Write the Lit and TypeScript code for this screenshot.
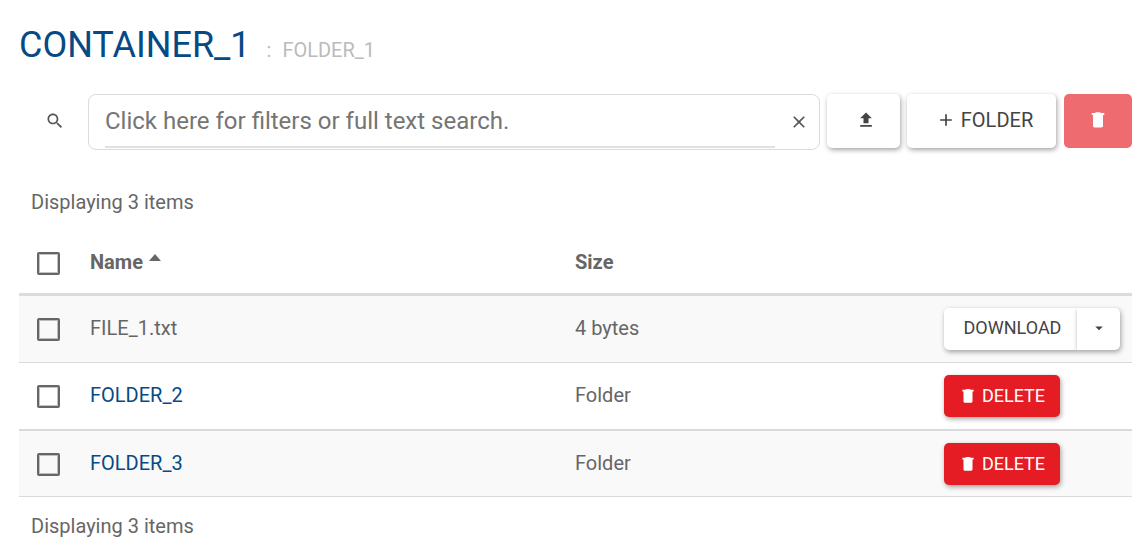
import { LitElement, html, css, svg, nothing } from "lit";
import { customElement, property } from "lit/decorators.js";

interface Item {
  name: string;
  size: string;
  folder: boolean;
}

const items: Item[] = [
  { name: "FILE_1.txt", size: "4 bytes", folder: false },
  { name: "FOLDER_2", size: "Folder", folder: true },
  { name: "FOLDER_3", size: "Folder", folder: true },
];

const glyphs = {
  search: svg`<path d="M15.5 14h-.79l-.28-.27C15.41 12.59 16 11.11 16 9.5 16 5.91 13.09 3 9.5 3S3 5.91 3 9.5 5.91 16 9.5 16c1.61 0 3.09-.59 4.23-1.57l.27.28v.79l5 4.99L20.49 19l-4.99-5zm-6 0C7.01 14 5 11.99 5 9.5S7.01 5 9.5 5 14 7.01 14 9.5 11.99 14 9.5 14z"/>`,
  close: svg`<path d="M19 6.41 17.59 5 12 10.59 6.41 5 5 6.41 10.59 12 5 17.59 6.41 19 12 13.41 17.59 19 19 17.59 13.41 12z"/>`,
  upload: svg`<path d="M9 16h6v-6h4l-7-7-7 7h4zm-4 2h14v2H5z"/>`,
  plus: svg`<path d="M19 13h-6v6h-2v-6H5v-2h6V5h2v6h6v2z"/>`,
  trash: svg`<path d="M6 19c0 1.1.9 2 2 2h8c1.1 0 2-.9 2-2V6H6zM19.500 3.600h-4l-1-.8h-5l-1 .8h-4V6h15z"/>`,
  down: svg`<path d="M7 10l5 5 5-5z"/>`,
};

@customElement("ui-icon")
export class UiIcon extends LitElement {
  @property() name: keyof typeof glyphs = "search";

  static styles = css`
    :host { display: inline-flex; width: 20px; height: 20px; flex: none; }
    svg { width: 100%; height: 100%; fill: currentColor; }
  `;

  render() {
    return html`<svg viewBox="0 0 24 24" aria-hidden="true">${glyphs[this.name]}</svg>`;
  }
}

@customElement("app-root")
export class AppRoot extends LitElement {
  static styles = css`
    :host {
      display: block;
      padding: 24px 10px 12px 19px;
      background: #fff;
      color: #666;
      font: 20px/24px Roboto, sans-serif;
    }
    *, *::before, *::after { box-sizing: border-box; }
    a { color: #064a85; text-decoration: none; }
    button { font: inherit; cursor: pointer; border: 0; margin: 0; }

    .title {
      display: flex;
      align-items: baseline;
      margin: 0;
      font-size: 36px;
      line-height: 42px;
      font-weight: 400;
    }
    .crumb { color: #bbb; font-size: 20px; line-height: 24px; }
    .sep { margin: 0 11px 0 16px; }

    .toolbar {
      display: flex;
      align-items: flex-start;
      margin-top: 28px;
    }
    .lookup {
      display: flex;
      justify-content: center;
      align-items: center;
      width: 69px;
      height: 54px;
      padding: 0 0 0 2px;
      background: none;
      color: #555;
    }
    .box {
      flex: 1;
      min-width: 0;
      display: flex;
      align-items: center;
      height: 56px;
      padding: 0 10px 0 16px;
      border: 1px solid #dadcdb;
      border-radius: 8px;
      margin-right: 7px;
    }
    .query {
      flex: 1;
      min-width: 0;
      height: 52px;
      padding: 0;
      border: 0;
      border-bottom: 2px solid #dfe2e0;
      outline: 0;
      background: none;
      color: #666;
      font: 24px/30px Roboto, sans-serif;
    }
    .query::placeholder { color: #757575; opacity: 1; }
    .clear {
      display: flex;
      padding: 0;
      margin-left: 14px;
      background: none;
      color: #555;
    }

    .btn {
      display: inline-flex;
      align-items: center;
      justify-content: center;
      height: 54px;
      border-radius: 5px;
      background: #fff;
      color: #444;
      box-shadow: 1px 2px 5px rgba(0, 0, 0, 0.36);
      white-space: nowrap;
    }
    .upload { width: 73px; margin-right: 7px; padding: 0 0 2px 4px; }
    .add { width: 149px; margin-right: 8px; padding: 0 0 2px 6px; gap: 5px; }
    .remove {
      width: 68px;
      padding: 0 0 2px;
      background: #ee6b70;
      color: #fff;
      box-shadow: none;
    }

    .count { margin: 0; padding: 0 12px; }
    .above { margin-top: 40px; }
    .below { margin-top: 17px; }

    .list {
      width: 100%;
      margin-top: 24px;
      border-collapse: separate;
      border-spacing: 0;
      table-layout: fixed;
    }
    .c-pick { width: 59px; }
    .c-size { width: 369px; }
    .c-act { width: 200px; }
    th, td {
      padding: 0 12px;
      text-align: left;
      vertical-align: top;
      border-bottom: 1px solid #dadada;
    }
    th {
      height: 58px;
      padding-top: 12px;
      font-weight: 700;
      border-bottom: 3px solid #dcdcdc;
    }
    td { padding-top: 12px; padding-bottom: 12px; line-height: 40px; }
    tr.even td { border-bottom-width: 2px; }
    tr.odd td { background: #f9f9f9; }
    tr:last-child td { padding-bottom: 11px; }
    th:first-child { padding: 14px 0 0 18px; }
    td:first-child { padding: 22px 0 0 18px; }
    .sort {
      display: inline-block;
      margin-left: 1px;
      border: 6px solid transparent;
      border-top: 0;
      border-bottom: 7px solid #666;
      vertical-align: 8px;
    }
    .tick {
      appearance: none;
      display: block;
      width: 23px;
      height: 23px;
      margin: 0;
      border: 2px solid #666;
      border-radius: 2px;
      background: transparent;
      box-shadow: inset 0 0 0 1px rgba(102, 102, 102, 0.4);
    }
    .tick:checked { background: #666; }
    .small { height: 42px; font-size: 18px; line-height: 22px; }
    .danger { width: 116px; padding: 0; background: #e51c23; color: #fff; gap: 5px; }
    .group { display: flex; }
    .main { width: 133px; padding: 0 0 2px 4px; border-radius: 5px 0 0 5px; }
    .more { width: 43px; padding: 0 0 2px; border-radius: 0 5px 5px 0; }
    .i-sm { width: 18px; height: 18px; }
    td.actions { line-height: 0; }
  `;

  private row(item: Item, index: number) {
    return html`<tr class=${index % 2 ? "even" : "odd"}>
      <td><input class="tick" type="checkbox" aria-label="Select ${item.name}" /></td>
      <td>${item.folder ? html`<a href="#${item.name}">${item.name}</a>` : item.name}</td>
      <td>${item.size}</td>
      <td class="actions">
        ${item.folder
          ? html`<button class="btn small danger"><ui-icon class="i-sm" name="trash"></ui-icon>DELETE</button>`
          : html`<div class="group">
              <button class="btn small main">DOWNLOAD</button>
              <button class="btn small more" aria-label="More actions"><ui-icon class="i-sm" name="down"></ui-icon></button>
            </div>`}
      </td>
    </tr>`;
  }

  private count(place: string) {
    return items.length ? html`<p class="count ${place}">Displaying ${items.length} items</p>` : nothing;
  }

  render() {
    return html`
      <h1 class="title">
        <a href="#root">CONTAINER_1</a>
        <span class="crumb sep">:</span>
        <span class="crumb">FOLDER_1</span>
      </h1>
      <div class="toolbar">
        <button class="lookup" aria-label="Search"><ui-icon name="search"></ui-icon></button>
        <div class="box">
          <input class="query" type="text" aria-label="Search" placeholder="Click here for filters or full text search." />
          <button class="clear" aria-label="Clear"><ui-icon name="close"></ui-icon></button>
        </div>
        <button class="btn upload" aria-label="Upload"><ui-icon name="upload"></ui-icon></button>
        <button class="btn add"><ui-icon name="plus"></ui-icon>FOLDER</button>
        <button class="btn remove" aria-label="Delete selected"><ui-icon name="trash"></ui-icon></button>
      </div>
      ${this.count("above")}
      <table class="list">
        <colgroup>
          <col class="c-pick" /><col /><col class="c-size" /><col class="c-act" />
        </colgroup>
        <thead>
          <tr>
            <th><input class="tick" type="checkbox" aria-label="Select all" /></th>
            <th>Name <span class="sort"></span></th>
            <th>Size</th>
            <th></th>
          </tr>
        </thead>
        <tbody>${items.map((item, i) => this.row(item, i))}</tbody>
      </table>
      ${this.count("below")}
    `;
  }
}
